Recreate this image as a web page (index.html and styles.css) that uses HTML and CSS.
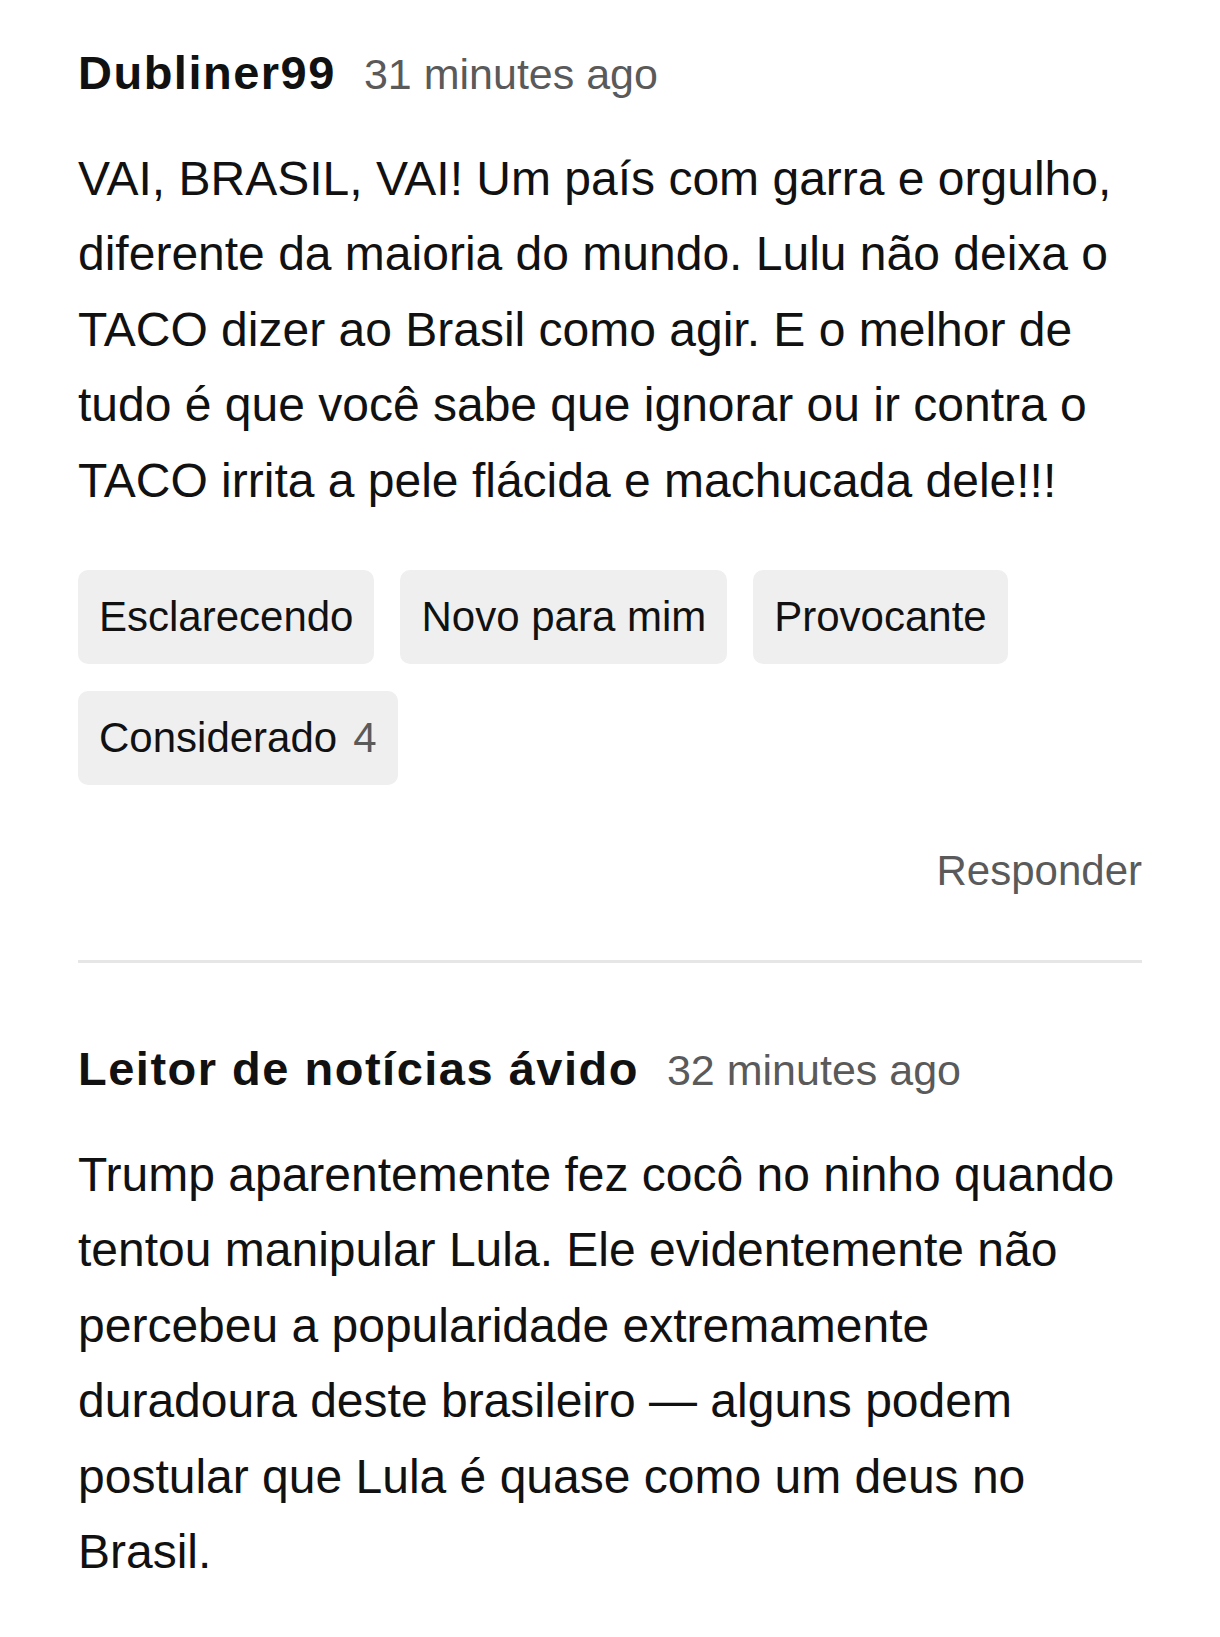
FILE: index.html
```html
<!DOCTYPE html>
<html lang="pt-BR">
<head>
    <meta charset="UTF-8">
    <meta name="viewport" content="width=device-width, initial-scale=1.0">
    <title>Comentários</title>
    <link rel="stylesheet" href="styles.css">
</head>
<body>
    <div class="comments">
        <div class="comment">
            <div class="comment-head">
                <span class="author">Dubliner99</span>
                <span class="time">31 minutes ago</span>
            </div>
            <p class="comment-body">VAI, BRASIL, VAI! Um país com garra e orgulho, diferente da maioria do mundo. Lulu não deixa o TACO dizer ao Brasil como agir. E o melhor de tudo é que você sabe que ignorar ou ir contra o TACO irrita a pele flácida e machucada dele!!!</p>

            <div class="reactions">
                <button class="chip">Esclarecendo</button>
                <button class="chip">Novo para mim</button>
                <button class="chip">Provocante</button>
                <button class="chip">Considerado <span class="count">4</span></button>
            </div>

            <div class="actions">
                <a class="reply">Responder</a>
            </div>
        </div>

        <div class="comment">
            <div class="comment-head">
                <span class="author">Leitor de notícias ávido</span>
                <span class="time">32 minutes ago</span>
            </div>
            <p class="comment-body">Trump aparentemente fez cocô no ninho quando tentou manipular Lula. Ele evidentemente não percebeu a popularidade extremamente duradoura deste brasileiro — alguns podem postular que Lula é quase como um deus no Brasil.</p>
        </div>
    </div>
</body>
</html>
```

FILE: styles.css
```css
body {
    margin: 0;
    background: #fff;
    color: #111;
    font-family: 'Liberation Sans', Arial, sans-serif;
}
.comments {
    padding: 43px 78px 0;
}
.comment + .comment {
    border-top: 3px solid #e6e6e6;
    padding-top: 76px;
}
.comment-head {
    display: flex;
    align-items: baseline;
    gap: 28px;
    line-height: 60px;
}
.author {
    font-size: 47px;
    font-weight: 700;
    letter-spacing: 1.5px;
}
.time {
    font-size: 43px;
    color: #5a5a5a;
}
.comment-body {
    margin: 37px 0 0;
    font-size: 48px;
    line-height: 75.4px;
}
.reactions {
    display: flex;
    flex-wrap: wrap;
    gap: 27px 26px;
    margin-top: 52px;
}
.chip {
    display: inline-flex;
    align-items: center;
    height: 94px;
    padding: 0 21px;
    border: 0;
    border-radius: 10px;
    background-color: #efefef;
    color: #111;
    font-family: 'Liberation Sans', Arial, sans-serif;
    font-size: 42px;
    cursor: pointer;
}
.chip .count {
    color: #5a5a5a;
    margin-left: 16px;
}
.actions {
    display: flex;
    justify-content: flex-end;
    margin-top: 56px;
    padding-bottom: 59px;
    line-height: 60px;
}
.reply {
    font-size: 42px;
    color: #5a5a5a;
    cursor: pointer;
}
```
